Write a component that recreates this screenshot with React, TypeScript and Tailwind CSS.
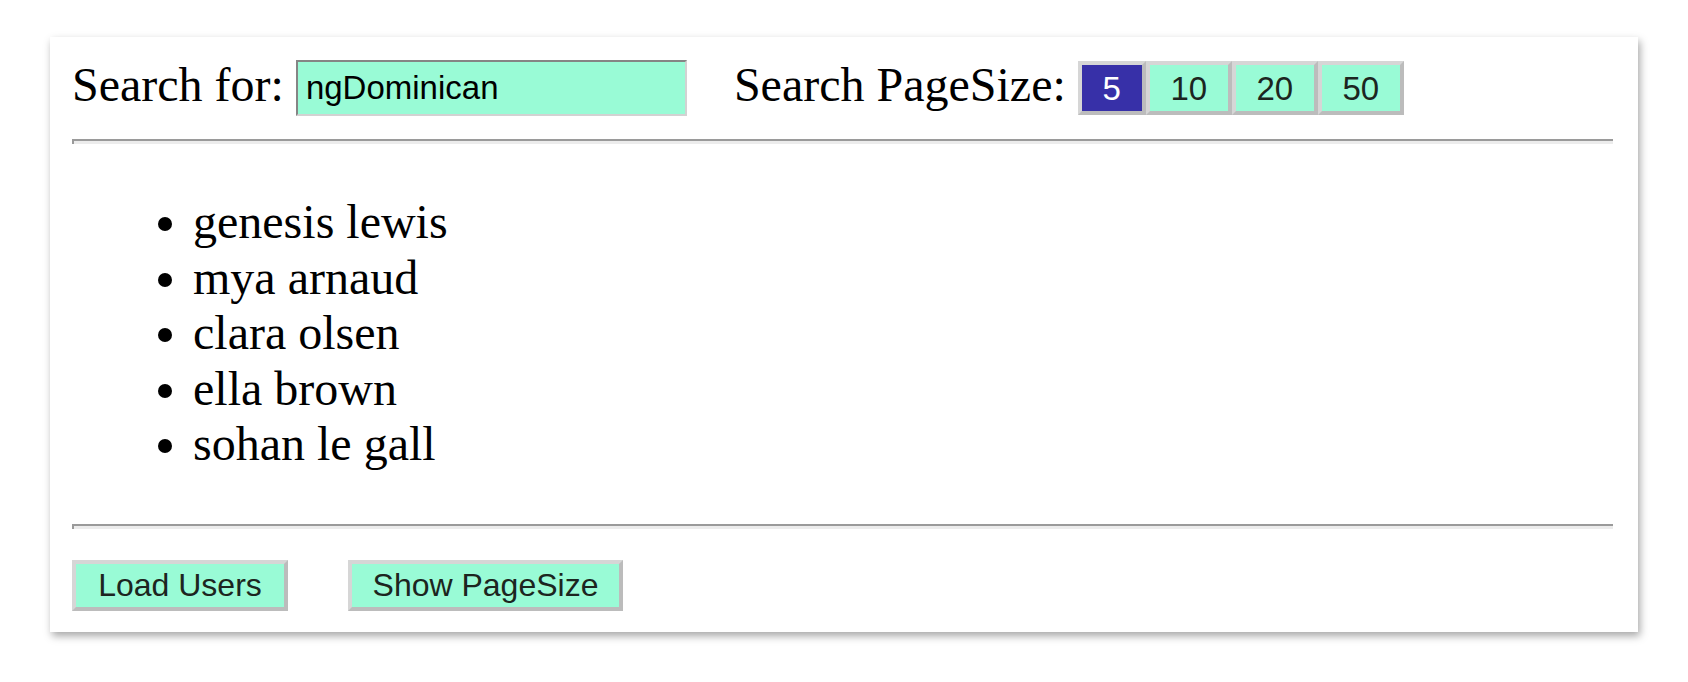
import React, { useState } from 'react';

const USERS = ['genesis lewis', 'mya arnaud', 'clara olsen', 'ella brown', 'sohan le gall'];
const SIZES = [
  { n: 5, w: 'w-[68px]' },
  { n: 10, w: 'w-[86px]' },
  { n: 20, w: 'w-[86px]' },
  { n: 50, w: 'w-[86px]' },
];

const serif = "font-['Liberation_Serif','Times_New_Roman',serif]";
const sans = "font-['Liberation_Sans',Arial,sans-serif]";

const Rule = () => (
  <div className="h-[5px] border-t-2 border-l-2 border-[#9a9a9a] bg-[#ececec]" />
);

export default function App() {
  const [size, setSize] = useState(5);
  const [query, setQuery] = useState('ngDominican');

  return (
    <div className="min-h-screen bg-white pt-[37px] pl-[50px]">
      <div className="w-[1588px] bg-white pt-[23px] pl-[22px] pr-[25px] pb-[21px] shadow-[2px_4px_8px_rgba(0,0,0,0.35)]">
        {/* Search row */}
        <div className="flex items-center h-[56px]">
          <span className={`${serif} self-start text-[48px] leading-[50px] text-black whitespace-nowrap`}>Search for:</span>
          <input
            value={query}
            onChange={(e) => setQuery(e.target.value)}
            className={`${sans} ml-[12px] w-[391px] h-[56px] bg-[#99fbd6] text-black text-[33px] leading-none pl-[8px] border-2 border-t-[#858585] border-l-[#858585] border-b-[#d2d2d2] border-r-[#d2d2d2] outline-none`}
          />
          <span className={`${serif} self-start ml-[47px] text-[48px] leading-[50px] text-black whitespace-nowrap`}>Search PageSize:</span>
          <div className="ml-[12px] flex">
            {SIZES.map((s) => (
              <button
                key={s.n}
                onClick={() => setSize(s.n)}
                className={`${sans} ${s.w} h-[54px] text-[33px] leading-none border-4 border-t-[#d6d6d6] border-l-[#d6d6d6] border-b-[#bcbcbc] border-r-[#bcbcbc] ${
                  size === s.n ? 'bg-[#3730a8] text-white' : 'bg-[#99fbd6] text-[#1c2520]'
                }`}
              >
                {s.n}
              </button>
            ))}
          </div>
        </div>

        <div className="mt-[23px]">
          <Rule />
        </div>

        {/* Results */}
        <ul className={`${serif} list-disc pl-[121px] mt-[50px] mb-[52px] text-[48px] leading-[55.5px] text-black`}>
          {USERS.slice(0, size).map((u) => (
            <li key={u}>{u}</li>
          ))}
        </ul>

        <Rule />

        {/* Actions */}
        <div className="mt-[31px] flex gap-[60px]">
          <button className={`${sans} w-[216px] h-[51px] text-[32px] leading-none bg-[#99fbd6] text-[#1c2520] border-4 border-t-[#d6d6d6] border-l-[#d6d6d6] border-b-[#bcbcbc] border-r-[#bcbcbc]`}>
            Load Users
          </button>
          <button className={`${sans} w-[275px] h-[51px] text-[32px] leading-none bg-[#99fbd6] text-[#1c2520] border-4 border-t-[#d6d6d6] border-l-[#d6d6d6] border-b-[#bcbcbc] border-r-[#bcbcbc]`}>
            Show PageSize
          </button>
        </div>
      </div>
    </div>
  );
}
